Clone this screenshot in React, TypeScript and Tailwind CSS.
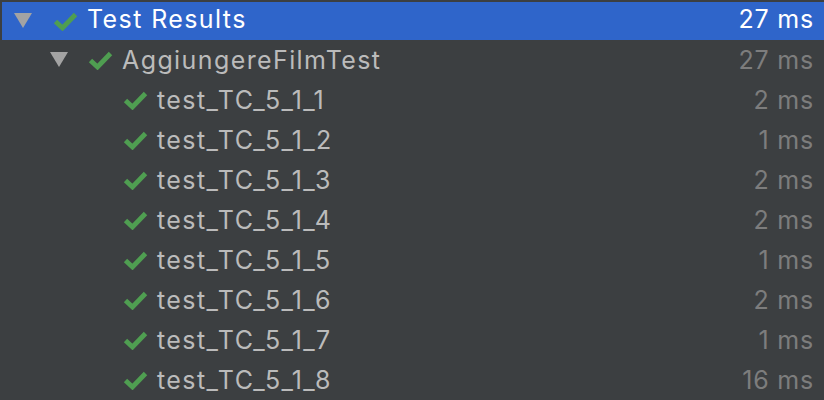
import React from "react";

const Triangle = () => (
  <svg width="18" height="16" viewBox="0 0 18 16" className="shrink-0">
    <polygon points="0,0 18,0 9,15" fill="#a3a3a3" />
  </svg>
);

const Check = () => (
  <svg width="25" height="19" viewBox="0 0 25 19" className="shrink-0">
    <path
      d="M2.5 9.5 L9.5 16 L22.5 2.5"
      fill="none"
      stroke="#4f9e51"
      strokeWidth="4.8"
      strokeLinejoin="miter"
    />
  </svg>
);

const TESTS = [
  { name: "test_TC_5_1_1", time: "2 ms" },
  { name: "test_TC_5_1_2", time: "1 ms" },
  { name: "test_TC_5_1_3", time: "2 ms" },
  { name: "test_TC_5_1_4", time: "2 ms" },
  { name: "test_TC_5_1_5", time: "1 ms" },
  { name: "test_TC_5_1_6", time: "2 ms" },
  { name: "test_TC_5_1_7", time: "1 ms" },
  { name: "test_TC_5_1_8", time: "16 ms" },
];

export default function App() {
  return (
    <div
      className="w-[824px] h-[400px] bg-[#3c3f41] overflow-hidden text-[25px] leading-none tracking-[1.4px]"
      style={{ fontFamily: "Inter, 'Noto Sans', sans-serif" }}
    >
      {/* root */}
      <div className="pt-[2px] pl-[2px]">
        <div className="h-[38px] bg-[#2f65ca] flex items-center pl-[12px] pr-[10px]">
          <Triangle />
          <div className="ml-[21px]">
            <Check />
          </div>
          <span className="ml-[9px] -mt-[3px] text-white">Test Results</span>
          <span className="ml-auto -mt-[3px] text-white tracking-[0.8px]">27 ms</span>
        </div>
      </div>

      {/* suite */}
      <div className="h-[40px] flex items-center pl-[50px] pr-[10px]">
        <Triangle />
        <div className="ml-[20px]">
          <Check />
        </div>
        <span className="ml-[9px] text-[#bbbbbb]">AggiungereFilmTest</span>
        <span className="ml-auto text-[#7d7d7d] tracking-[0.8px]">27 ms</span>
      </div>

      {TESTS.map((t) => (
        <div key={t.name} className="h-[40px] flex items-center pl-[123px] pr-[10px]">
          <Check />
          <span className="ml-[9px] text-[#bbbbbb]">{t.name}</span>
          <span className="ml-auto text-[#7d7d7d] tracking-[0.8px]">{t.time}</span>
        </div>
      ))}
    </div>
  );
}
